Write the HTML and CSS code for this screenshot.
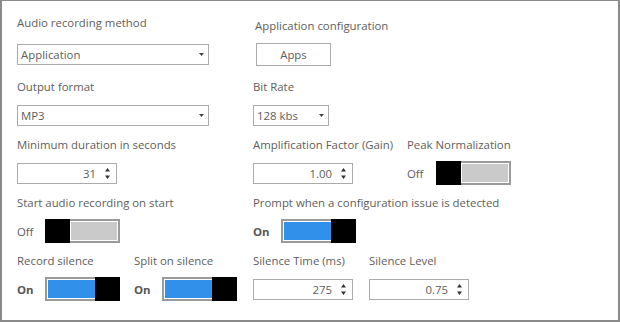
FILE: index.html
```html
<!DOCTYPE html>
<html>
<head>
<meta charset="utf-8">
<link rel="stylesheet" href="styles.css">
</head>
<body>
<div class="panel">
  <div class="row row1">
    <div class="field w236">
      <div class="label">Audio recording method</div>
      <div class="ctl">
        <div class="select w192"><span class="val">Application</span><svg class="caret" width="5" height="3" viewBox="0 0 5 3"><path d="M0 0H5L2.5 3Z"/></svg></div>
      </div>
    </div>
    <div class="field appcfg">
      <div class="label">Application configuration</div>
      <div class="ctl"><div class="button">Apps</div></div>
    </div>
  </div>

  <div class="row">
    <div class="field w236">
      <div class="label">Output format</div>
      <div class="ctl">
        <div class="select w192"><span class="val">MP3</span><svg class="caret" width="5" height="3" viewBox="0 0 5 3"><path d="M0 0H5L2.5 3Z"/></svg></div>
      </div>
    </div>
    <div class="field">
      <div class="label">Bit Rate</div>
      <div class="ctl">
        <div class="select w76"><span class="val">128 kbs</span><svg class="caret" width="5" height="3" viewBox="0 0 5 3"><path d="M0 0H5L2.5 3Z"/></svg></div>
      </div>
    </div>
  </div>

  <div class="row">
    <div class="field w236">
      <div class="label">Minimum duration in seconds</div>
      <div class="ctl">
        <div class="number"><span class="num">31</span><svg class="spin" width="5" height="11" viewBox="0 0 5 11"><path d="M2.5 0L5 3.5H0Z M0 7.5H5L2.5 11Z"/></svg></div>
      </div>
    </div>
    <div class="field w154">
      <div class="label">Amplification Factor (Gain)</div>
      <div class="ctl">
        <div class="number"><span class="num">1.00</span><svg class="spin" width="5" height="11" viewBox="0 0 5 11"><path d="M2.5 0L5 3.5H0Z M0 7.5H5L2.5 11Z"/></svg></div>
      </div>
    </div>
    <div class="field">
      <div class="label">Peak Normalization</div>
      <div class="ctl">
        <span class="state wide">Off</span>
        <div class="toggle off"><div class="thumb"></div><div class="track"><div class="fill"></div></div></div>
      </div>
    </div>
  </div>

  <div class="row">
    <div class="field w236">
      <div class="label">Start audio recording on start</div>
      <div class="ctl">
        <span class="state">Off</span>
        <div class="toggle off"><div class="thumb"></div><div class="track"><div class="fill"></div></div></div>
      </div>
    </div>
    <div class="field">
      <div class="label">Prompt when a configuration issue is detected</div>
      <div class="ctl">
        <span class="state bold">On</span>
        <div class="toggle on"><div class="track"><div class="fill"></div></div><div class="thumb"></div></div>
      </div>
    </div>
  </div>

  <div class="row">
    <div class="field w117">
      <div class="label">Record silence</div>
      <div class="ctl">
        <span class="state bold">On</span>
        <div class="toggle on"><div class="track"><div class="fill"></div></div><div class="thumb"></div></div>
      </div>
    </div>
    <div class="field w119">
      <div class="label">Split on silence</div>
      <div class="ctl">
        <span class="state bold">On</span>
        <div class="toggle on"><div class="track"><div class="fill"></div></div><div class="thumb"></div></div>
      </div>
    </div>
    <div class="field w116">
      <div class="label">Silence Time (ms)</div>
      <div class="ctl">
        <div class="number"><span class="num">275</span><svg class="spin" width="5" height="11" viewBox="0 0 5 11"><path d="M2.5 0L5 3.5H0Z M0 7.5H5L2.5 11Z"/></svg></div>
      </div>
    </div>
    <div class="field">
      <div class="label">Silence Level</div>
      <div class="ctl">
        <div class="number"><span class="num">0.75</span><svg class="spin" width="5" height="11" viewBox="0 0 5 11"><path d="M2.5 0L5 3.5H0Z M0 7.5H5L2.5 11Z"/></svg></div>
      </div>
    </div>
  </div>
</div>
</body>
</html>
```

FILE: styles.css
```css
* { box-sizing: border-box; }

body {
  margin: 0;
  font-family: "Open Sans", "Noto Sans", sans-serif;
  font-size: 11.4px;
  color: #5e5e5e;
  background: #fff;
}

.panel {
  width: 620px;
  height: 322px;
  border: 2px solid #8a8a8a;
  border-top-width: 1px;
  padding: 14px 0 0 15px;
  display: flex;
  flex-direction: column;
}

.row { display: flex; }
.row + .row { margin-top: 10px; }
.row1 + .row { margin-top: 13px; }

.field {
  display: flex;
  flex-direction: column;
  gap: 8px;
}
.row1 .field { gap: 11px; }
.row1 .appcfg { margin-left: 2px; gap: 8px; }
.row1 .appcfg .label { margin-top: 3px; }

.w236 { width: 236px; }
.w154 { width: 154px; }
.w117 { width: 117px; }
.w119 { width: 119px; }
.w116 { width: 116px; }

.label {
  height: 16px;
  line-height: 16px;
  white-space: nowrap;
}

.ctl {
  height: 24px;
  display: flex;
  align-items: center;
}

.select {
  height: 21px;
  border: 1px solid #ababab;
  display: flex;
  align-items: center;
  padding: 0 4px 0 3px;
  background: #fff;
}
.w192 { width: 192px; }
.w76 { width: 76px; }
.select .val { flex: 1; white-space: nowrap; }
.caret { fill: #444; display: block; }

.button {
  margin-left: 1px;
  width: 75px;
  height: 23px;
  border: 1px solid #ababab;
  display: flex;
  align-items: center;
  justify-content: center;
  background: #fff;
}

.number {
  width: 100px;
  height: 21px;
  border: 1px solid #ababab;
  display: flex;
  align-items: center;
  padding-right: 6px;
}
.number .num { flex: 1; text-align: right; padding-right: 9px; }
.spin { fill: #333; display: block; }

.state { width: 28px; }
.state.wide { width: 29px; }
.state.bold { font-weight: 700; color: #555; }

.toggle {
  display: flex;
  width: 75px;
  height: 24px;
}
.thumb {
  width: 25px;
  height: 24px;
  background: #000;
}
.track {
  flex: 1;
  height: 24px;
  border: 2px solid #9a9a9a;
  padding: 1px;
  background: #fff;
  display: flex;
}
.fill { flex: 1; }
.toggle.on .track { border-right: 0; padding-right: 0; }
.toggle.on .fill { background: #3190ea; }
.toggle.off .track { border-left: 0; }
.toggle.off .fill { background: #cacaca; }
```
